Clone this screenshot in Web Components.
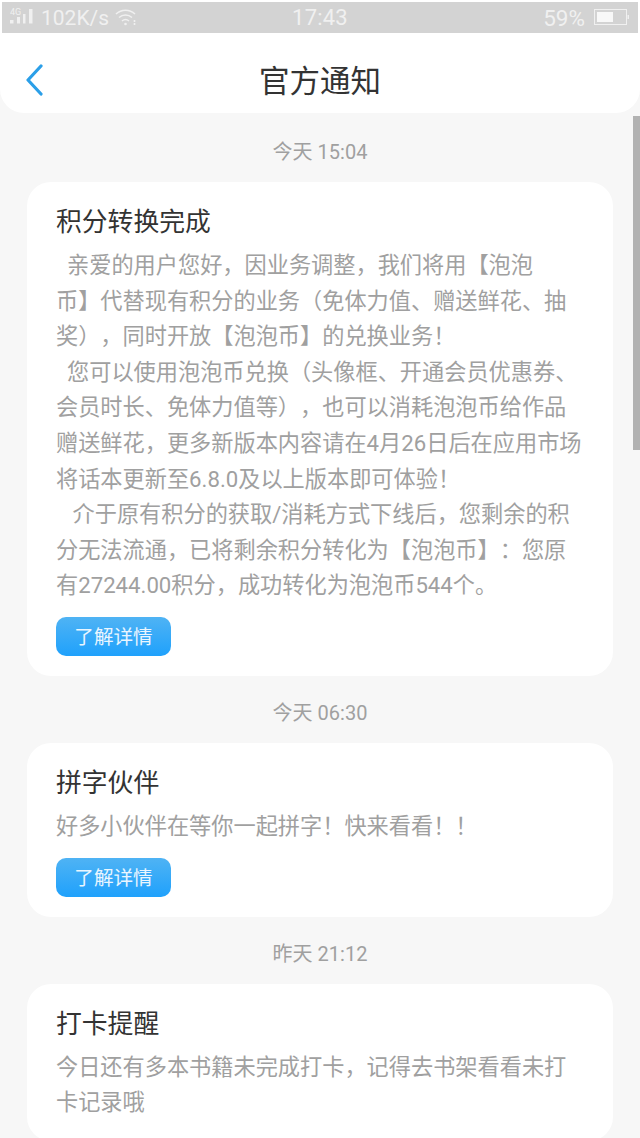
<!DOCTYPE html>
<html lang="zh">
<head>
<meta charset="utf-8">
<style>
  html, body { margin: 0; height: 1138px; overflow: hidden; background: #f7f7f7; }
  body { font-family: Roboto, "Noto Sans CJK SC", sans-serif; text-spacing-trim: space-all; }
</style>
</head>
<body>
<app-screen>
  <status-bar slot="status"></status-bar>
  <nav-header slot="header" title="官方通知"></nav-header>
  <time-label>今天 15:04</time-label>
  <notice-card heading="积分转换完成" action="了解详情">
    &nbsp;&nbsp;亲爱的用户您好，因业务调整，我们将用【泡泡<br>币】代替现有积分的业务（免体力值、赠送鲜花、抽<br>奖），同时开放【泡泡币】的兑换业务！<br>
    &nbsp;&nbsp;您可以使用泡泡币兑换（头像框、开通会员优惠券、<br>会员时长、免体力值等），也可以消耗泡泡币给作品<br>赠送鲜花，更多新版本内容请在4月26日后在应用市场<br>将话本更新至6.8.0及以上版本即可体验！<br>
    &nbsp;&nbsp;&nbsp;介于原有积分的获取/消耗方式下线后，您剩余的积<br>分无法流通，已将剩余积分转化为【泡泡币】：您原<br>有27244.00积分，成功转化为泡泡币544个。
  </notice-card>
  <time-label>今天 06:30</time-label>
  <notice-card heading="拼字伙伴" action="了解详情">好多小伙伴在等你一起拼字！快来看看！！</notice-card>
  <time-label>昨天 21:12</time-label>
  <notice-card heading="打卡提醒">今日还有多本书籍未完成打卡，记得去书架看看未打<br>卡记录哦</notice-card>
</app-screen>

<script>
class AppScreen extends HTMLElement {
  constructor() {
    super();
    this.attachShadow({ mode: 'open' });
    this.shadowRoot.innerHTML = `
      <style>
        :host { display: block; position: relative; height: 1138px; overflow: hidden; background: #f7f7f7; }
        .top { background: #fff; padding: 2px 2px 0; }
        .list { padding: 2px 27px 0; display: block; }
        .scroll { position: absolute; right: 0; top: 116px; width: 7px; height: 334px; background: #b2b2b2; }
      </style>
      <div class="top"><slot name="status"></slot></div>
      <slot name="header"></slot>
      <div class="list"><slot></slot></div>
      <div class="scroll"></div>
    `;
  }
}

class StatusBar extends HTMLElement {
  constructor() {
    super();
    this.attachShadow({ mode: 'open' });
    this.shadowRoot.innerHTML = `
      <style>
        :host { display: grid; grid-template-columns: 1fr auto 1fr; align-items: center; height: 31px; background: #d3d3d3; color: #f0f0f0; font-size: 21px; line-height: 30px; }
        .left { display: flex; align-items: center; padding-left: 8px; gap: 6px; }
        .right { display: flex; align-items: center; justify-content: flex-end; padding-right: 9px; gap: 9px; font-size: 22.5px; }
        .clock { font-size: 22px; letter-spacing: .2px; }
        svg { display: block; }
      </style>
      <div class="left">
        <svg width="25" height="20" viewBox="0 0 25 20" fill="#f0f0f0">
          <text x="0" y="7" font-size="9" font-family="Roboto, sans-serif">4G</text>
          <rect x="0" y="12" width="3.5" height="3.5"/>
          <rect x="7" y="9" width="3" height="6.5"/>
          <rect x="13" y="6" width="2.5" height="9.5"/>
          <rect x="19" y="1" width="3.5" height="14.5"/>
        </svg>
        <span>102K/s</span>
        <svg width="22" height="20" viewBox="0 0 22 20" fill="none" stroke="#f0f0f0" stroke-width="1.6">
          <path d="M1 6c5.5-5 13.5-5 19 0"/>
          <path d="M4 9.5c3.8-3.4 9.2-3.4 13 0"/>
          <path d="M7 13c2-1.7 5-1.7 7 0"/>
          <circle cx="10.5" cy="16" r="1.3" fill="#f0f0f0" stroke="none"/>
          <path d="M19.5 12v6" stroke-dasharray="2 1"/>
        </svg>
      </div>
      <div class="clock">17:43</div>
      <div class="right">
        <span>59%</span>
        <svg width="35" height="17" viewBox="0 0 35 17">
          <rect x=".5" y=".5" width="32" height="15" fill="none" stroke="#f0f0f0"/>
          <rect x="3" y="3" width="16" height="10" fill="#f8f8f8"/>
          <rect x="33.5" y="6" width="1.5" height="4" fill="#f0f0f0"/>
        </svg>
      </div>
    `;
  }
}

class NavHeader extends HTMLElement {
  constructor() {
    super();
    this.attachShadow({ mode: 'open' });
    this.shadowRoot.innerHTML = `
      <style>
        :host { display: flex; align-items: center; justify-content: center; position: relative; height: 80px; box-sizing: border-box; padding-top: 19px; background: #fff; border-radius: 0 0 24px 24px; }
        .title { font-size: 30.5px; color: #333; line-height: 1; }
        svg { position: absolute; left: 24px; top: 31px; }
      </style>
      <svg width="20" height="32" viewBox="0 0 20 32" fill="none" stroke="#2b9fe8" stroke-width="3.2" stroke-linecap="round" stroke-linejoin="round">
        <path d="M17 2 4 16 17 30"/>
      </svg>
      <div class="title"></div>
    `;
    this.shadowRoot.querySelector('.title').textContent = this.getAttribute('title');
  }
}

class TimeLabel extends HTMLElement {
  constructor() {
    super();
    this.attachShadow({ mode: 'open' });
    this.shadowRoot.innerHTML = `
      <style>
        :host { display: block; text-align: center; font-size: 20px; line-height: 30px; color: #a0a0a0; padding: 22px 0 15px; }
      </style>
      <slot></slot>
    `;
  }
}

class NoticeCard extends HTMLElement {
  constructor() {
    super();
    this.attachShadow({ mode: 'open' });
    this.shadowRoot.innerHTML = `
      <style>
        :host { display: block; background: #fff; border-radius: 24px; padding: 20px 29px; }
        .heading { font-size: 25.8px; line-height: 40px; color: #333; margin-bottom: 6px; }
        .body { font-size: 22.2px; line-height: 35.6px; color: #a0a0a0; white-space: nowrap; }
        .action { display: block; margin-top: 13px; width: 115px; height: 39px; box-sizing: border-box; padding-top: 2px; line-height: 37px; text-align: center; font-size: 19.6px; color: #eaf6ff; border-radius: 10px; background: linear-gradient(#4fb3f4, #1fa1fc); }
        .action[hidden] { display: none; }
      </style>
      <div class="heading"></div>
      <div class="body"><slot></slot></div>
      <div class="action"></div>
    `;
    this.shadowRoot.querySelector('.heading').textContent = this.getAttribute('heading');
    const action = this.shadowRoot.querySelector('.action');
    const label = this.getAttribute('action');
    if (label) action.textContent = label;
    else action.hidden = true;
  }
}

customElements.define('app-screen', AppScreen);
customElements.define('status-bar', StatusBar);
customElements.define('nav-header', NavHeader);
customElements.define('time-label', TimeLabel);
customElements.define('notice-card', NoticeCard);
</script>
</body>
</html>
